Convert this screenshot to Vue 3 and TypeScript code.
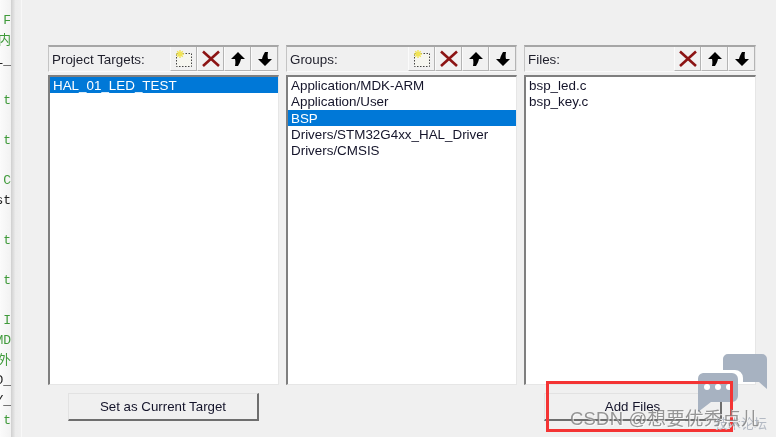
<script setup lang="ts">
interface Panel {
  title: string
  add: boolean
  items: string[]
  selected: number
}

const panels: Panel[] = [
  { title: 'Project Targets:', add: true, items: ['HAL_01_LED_TEST'], selected: 0 },
  {
    title: 'Groups:',
    add: true,
    items: ['Application/MDK-ARM', 'Application/User', 'BSP', 'Drivers/STM32G4xx_HAL_Driver', 'Drivers/CMSIS'],
    selected: 2,
  },
  { title: 'Files:', add: false, items: ['bsp_led.c', 'bsp_key.c'], selected: -1 },
]

const codeLines = [
  { t: 'F', c: 'g' }, { t: '内', c: 'g' }, { t: 'L_', c: 'k' }, { t: '', c: 'g' },
  { t: 't', c: 'g' }, { t: '', c: 'g' }, { t: 't', c: 'g' }, { t: '', c: 'g' },
  { t: 'C', c: 'g' }, { t: 'st', c: 'k' }, { t: '', c: 'g' }, { t: 't', c: 'g' },
  { t: '', c: 'g' }, { t: 't', c: 'g' }, { t: '', c: 'g' }, { t: 'I', c: 'g' },
  { t: 'MD', c: 'g' }, { t: '外', c: 'g' }, { t: 'D_', c: 'k' }, { t: 'Y_', c: 'k' }, { t: 't', c: 'g' },
]
</script>

<template>
  <div class="screen">
    <div class="code">
      <div v-for="(l, i) in codeLines" :key="i" class="code-line" :class="l.c">{{ l.t }}</div>
    </div>
    <div class="edge"></div>
    <div class="dialog">
      <div class="panels">
        <section v-for="p in panels" :key="p.title" class="panel">
          <header class="head">
            <span class="title">{{ p.title }}</span>
            <div class="tools">
              <button v-if="p.add" class="tool" type="button">
                <svg width="20" height="20" viewBox="0 0 20 20">
                  <rect x="2.500" y="4.500" width="15" height="13" fill="#f6f6f0" stroke="#444" stroke-dasharray="1.500 1.500" />
                  <path d="M6 1v8M2 5h8M3.200 2.200l5.600 5.600M8.800 2.200L3.200 7.800" stroke="#f1e455" stroke-width="1.400" />
                </svg>
              </button>
              <button class="tool" type="button">
                <svg width="20" height="20" viewBox="0 0 20 20">
                  <path d="M2 2.500l16 14.500M18 2.500L2 17" stroke="#8c1414" stroke-width="2.600" fill="none" />
                </svg>
              </button>
              <button class="tool" type="button">
                <svg width="20" height="20" viewBox="0 0 20 20">
                  <path d="M10 3l7 7h-4c-.5 3-2 5-3 7H7c.5-3 .5-5 0-7H3z" fill="#000" />
                </svg>
              </button>
              <button class="tool" type="button">
                <svg width="20" height="20" viewBox="0 0 20 20">
                  <path d="M10 17l-7-7h4c.5-3 2-5 3-7h3c-.5 3-.5 5 0 7h4z" fill="#000" />
                </svg>
              </button>
            </div>
          </header>
          <ul class="list">
            <li v-for="(it, i) in p.items" :key="it" :class="{ sel: i === p.selected }">{{ it }}</li>
          </ul>
        </section>
      </div>
      <div class="actions">
        <button class="btn target" type="button">Set as Current Target</button>
        <button class="btn add" type="button">Add Files</button>
      </div>
    </div>

    <svg class="bubbles" width="72" height="60" viewBox="0 0 72 60">
      <path d="M31 0h34a5 5 0 0 1 5 5v30l-8-7H46v-4a8 8 0 0 0-8-8H26V5a5 5 0 0 1 5-5z" fill="#a7b2c1" />
      <path d="M6 19h29a6 6 0 0 1 6 6v17a6 6 0 0 1-6 6H14L1 58V25a6 6 0 0 1 5-6z" fill="#a7b2c1" />
      <circle cx="10" cy="33" r="3" fill="#fff" />
      <circle cx="21" cy="33" r="3" fill="#fff" />
      <circle cx="32" cy="33" r="3" fill="#fff" />
    </svg>
    <div class="highlight"></div>
    <div class="faint">技术论坛</div>
    <div class="mark">CSDN @想要优秀点儿</div>
  </div>
</template>

<style>
html, body { margin: 0; background: #f0f0f0; overflow: hidden; }
</style>

<style scoped>
.screen {
  position: relative;
  width: 776px;
  height: 437px;
  overflow: hidden;
  display: flex;
  background: #f0f0f0;
  font-family: "Liberation Sans", Arial, sans-serif;
  filter: blur(0.45px);
}
.code {
  width: 11px;
  padding-top: 11px;
  background: linear-gradient(90deg, #fbfbfb, #f2f2f2);
  overflow: hidden;
  flex: none;
  font: 13px/20px "Liberation Mono", "Noto Sans CJK SC", monospace;
}
.code-line { height: 20px; display: flex; justify-content: flex-end; white-space: nowrap; }
.g { color: #3f9a3a; }
.k { color: #222; }
.edge {
  width: 10px;
  flex: none;
  background: linear-gradient(90deg, #cfcfcf, #ececec 45%, #efefef);
  border-right: 1px solid #f8f8f8;
}
.dialog { flex: 1; padding: 45px 20px 0 26px; min-width: 0; }
.panels {
  display: grid;
  grid-template-columns: 231px 231px 232px;
  gap: 7px;
}
.panel { display: flex; flex-direction: column; gap: 3px; }
.head {
  height: 27px;
  box-sizing: border-box;
  border-top: 2px solid #a6a6a6;
  border-left: 1px solid #c4c4c4;
  border-right: 1px solid #e4e4e4;
  border-bottom: 1px solid #fafafa;
  display: flex;
  align-items: center;
  justify-content: space-between;
}
.title { font-size: 13.4px; color: #1e1e2a; padding-left: 3px; }
.tools { display: flex; align-self: stretch; }
.tool {
  width: 27px;
  padding: 0;
  margin: 0;
  border: 0;
  border-left: 1px solid #fbfbfb;
  border-right: 1px solid #b4b4b4;
  border-bottom: 1px solid #b4b4b4;
  background: #f1f1f1;
  display: flex;
  align-items: center;
  justify-content: center;
}
.list {
  list-style: none;
  margin: 0;
  padding: 0;
  height: 310px;
  box-sizing: border-box;
  background: #fff;
  border-top: 2px solid #7f7f7f;
  border-left: 2px solid #7f7f7f;
  border-right: 1px solid #e6e6e6;
  border-bottom: 1px solid #e6e6e6;
  font-size: 13.4px;
  color: #14142a;
}
.list li { padding-left: 3px; height: 16.25px; line-height: 17px; white-space: nowrap; }
.list li.sel { background: #0078d7; color: #fff; }
.actions {
  display: flex;
  justify-content: space-between;
  margin-top: 8px;
  padding-left: 20px;
}
.btn {
  height: 28px;
  box-sizing: border-box;
  background: #f0f0f0;
  border: 1px solid #e2e2e2;
  border-right: 2px solid #6e6e6e;
  border-bottom: 2px solid #6e6e6e;
  font: 13.3px "Liberation Sans", Arial, sans-serif;
  color: #14142a;
  padding: 0;
}
.target { width: 191px; }
.add { width: 178px; margin-right: 34px; }
.highlight {
  position: absolute;
  left: 546px;
  top: 381px;
  width: 187px;
  height: 51px;
  box-sizing: border-box;
  border: 3px solid #f43434;
}
.bubbles { position: absolute; left: 697px; top: 354px; }
.mark {
  position: absolute;
  left: 570px;
  top: 404px;
  font: 18.5px "Liberation Sans", "Noto Sans CJK SC", sans-serif;
  letter-spacing: 0.2px;
  color: rgba(125, 125, 125, 0.8);
  text-shadow: 1px 1px 0 rgba(255, 255, 255, 0.7);
  white-space: nowrap;
}
.faint {
  position: absolute;
  left: 715px;
  top: 413px;
  font: 13px "Noto Sans CJK SC", sans-serif;
  color: #b4bac4;
  white-space: nowrap;
}
</style>
